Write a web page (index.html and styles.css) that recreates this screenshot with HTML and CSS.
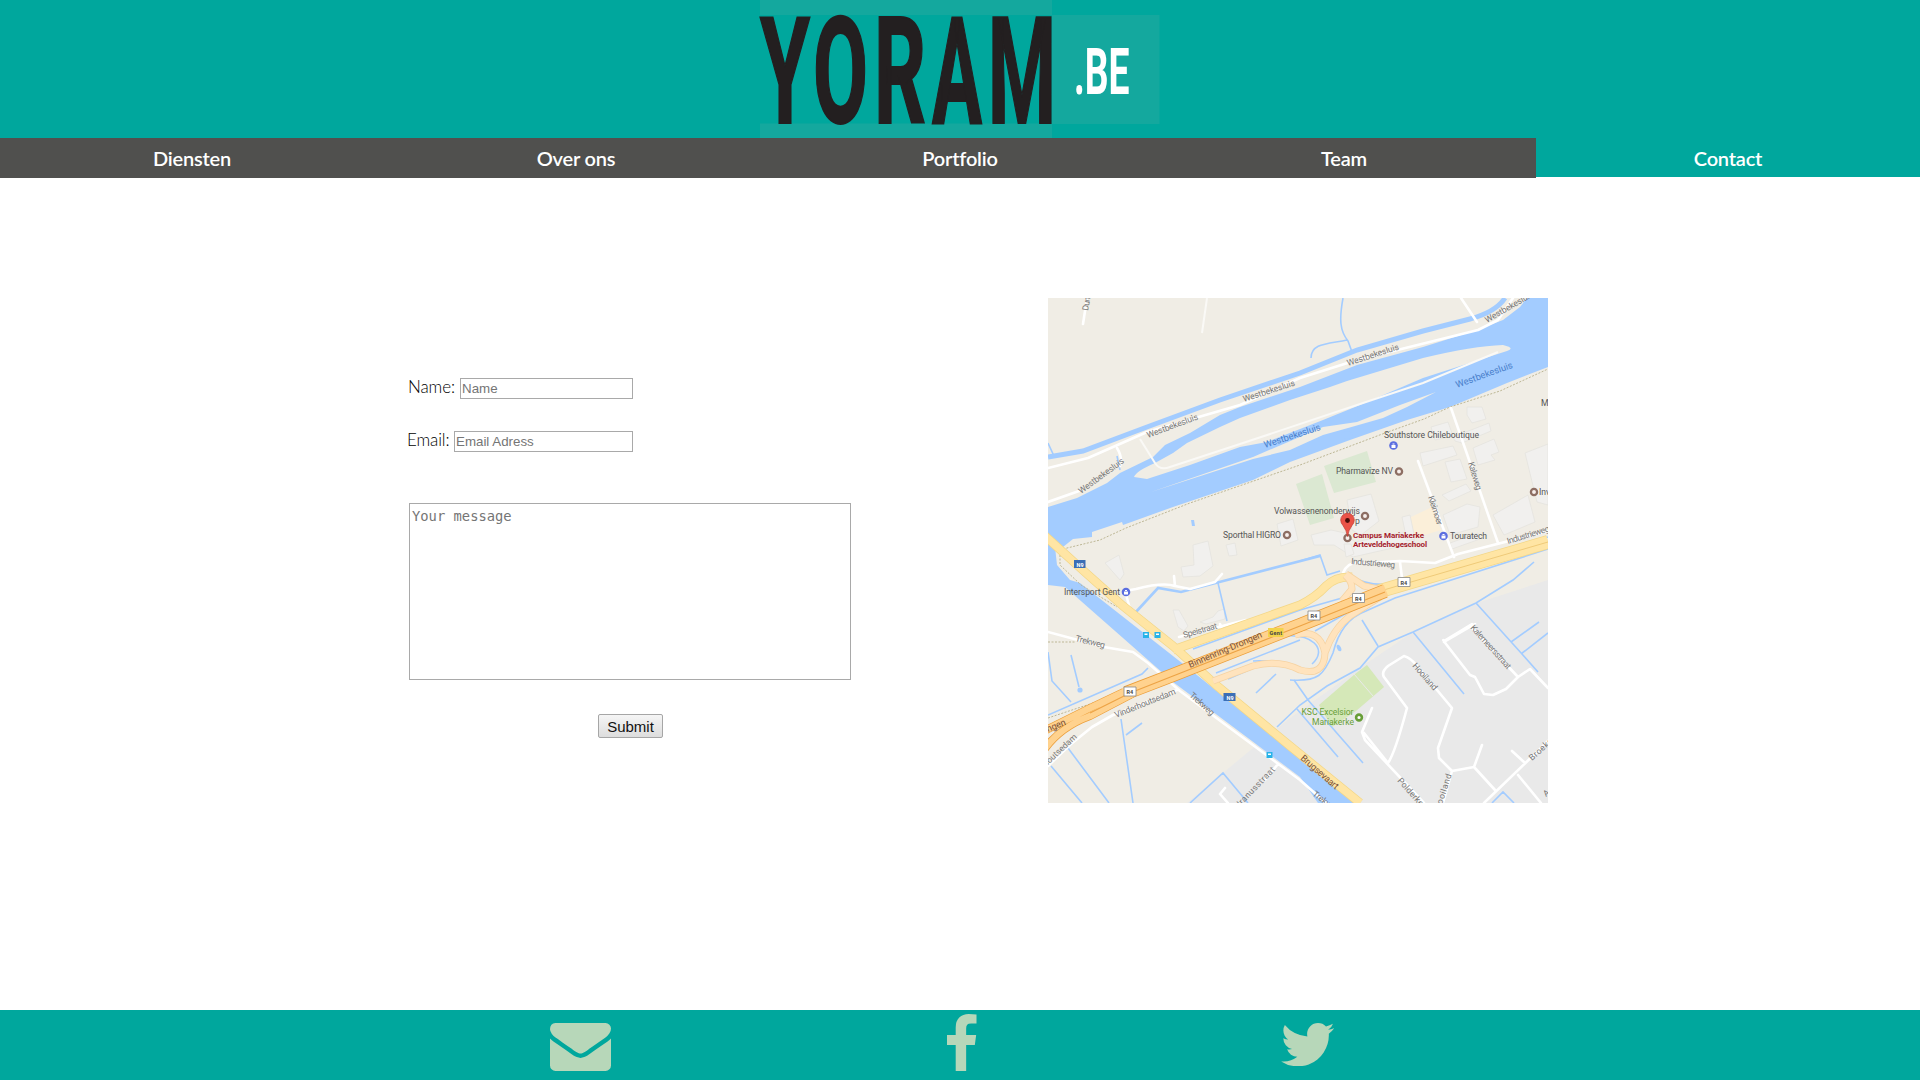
FILE: index.html
```html
<!DOCTYPE html>
<html lang="nl">
<head>
<meta charset="utf-8">
<title>Yoram.be - Contact</title>
<link rel="stylesheet" href="styles.css">
</head>
<body>
<header class="header">
  <svg class="logo" viewBox="0 0 400 138" role="img" aria-label="Yoram.be">
    <path class="logo-panel" d="M0 0h292v15H0zM0 123.500h292V138H0zM292 15h107.500v109H292z"/>
    <g class="logo-name">
      <text x="0" y="122.500" textLength="50" lengthAdjust="spacingAndGlyphs">Y</text>
      <text x="53" y="122.500" textLength="55" lengthAdjust="spacingAndGlyphs">O</text>
      <text x="114" y="122.500" textLength="52" lengthAdjust="spacingAndGlyphs">R</text>
      <text x="172" y="122.500" textLength="50" lengthAdjust="spacingAndGlyphs">A</text>
      <text x="228" y="122.500" textLength="68" lengthAdjust="spacingAndGlyphs">M</text>
    </g>
    <text class="logo-tld" x="314" y="93.500" textLength="55.500" lengthAdjust="spacingAndGlyphs">.BE</text>
  </svg>
</header>
<nav class="nav">
  <a class="nav-item">Diensten</a>
  <a class="nav-item">Over ons</a>
  <a class="nav-item">Portfolio</a>
  <a class="nav-item">Team</a>
  <a class="nav-item nav-active">Contact</a>
</nav>
<main class="main">
  <form class="form">
    <div class="field"><label for="name">Name:</label><input id="name" type="text" placeholder="Name"></div>
    <div class="field field-email"><label for="email">Email:</label><input id="email" type="text" placeholder="Email Adress"></div>
    <textarea class="message" placeholder="Your message"></textarea>
    <button class="submit" type="button">Submit</button>
  </form>
  <svg class="map" viewBox="0 0 500 505">
    <rect width="500" height="505" fill="#f0ede5"/>
    <path fill="#e9e9e9" d="M500 282L429 305 365 334 319 365 242 420 225 434 205 450 139 505H500z"/>
    <!-- parks and sports fields -->
    <path fill="#dbe8d2" d="M276 168L319 153 328 184 286 195zM248 186L274 176 286 220 262 227z"/>
    <path fill="#d5e8b8" d="M271 407L307 376 319 367 336 389 308 413 284 429z"/>
    <path stroke="#e9e9e9" fill="none" d="M306 376L325 398"/>
    <path fill="#fbefd9" d="M361 220L384 209 393 232 367 240z"/>
    <!-- buildings -->
    <g fill="#f1f0ee" stroke="#e5e3de" stroke-width=".8">
      <path d="M419 109L434 109 438 121 424 125 419 117zM383 129L400 124 405 138 387 142zM405 139L441 125 443 133 414 145 407 143zM372 155L405 148 409 157 375 168zM397 164L412 161 419 181 403 184zM425 150L446 141 451 154 443 157 447 162 430 167zM394 197L418 186 423 193 401 203zM395 217L419 206 432 209 430 229 402 237zM445 217L480 197 487 224 456 237zM477 155L500 146V207L489 204z"/>
      <path d="M299 202L323 196 331 223 313 237 304 232zM263 237L283 232 297 235 307 244 363 233 367 245 305 259 286 247 266 247z"/>
      <path d="M354 219L362 217 367 241 359 243zM229 226L245 221 250 242 233 248zM402 245L430 235 432 241 404 251zM296 246L303 246 306 256 298 259z"/>
      <path d="M57 265L71 257 76 276 72 282zM145 247L160 243 165 268 152 278 135 279 133 269 146 267zM178 247L187 245 189 257 181 258zM125 312L131 312 140 328 136 333 130 329zM152 324L165 319 170 313 176 311 177 321 158 326z"/>
    </g>
    <!-- minor waterways -->
    <g fill="none" stroke="#a3ccff" stroke-width="1.600">
      <path d="M295 0C291 22 292 33 300 43L304 54M299 42C280 46 263 45 263 60M0 145L6 158M69 158L72 172"/>
      <path d="M87 315L110 290 133 294 272 258" stroke-width="2.600"/>
      <path d="M252 263L272 257 279 277 292 273M170 285L179 323M145 351L252 312 294 300M168 375L252 342M180 381L210 368M0 354L4 383 23 404M23 357L31 389M0 417L94 376 100 370M73 421L85 505M78 437L94 425M20 450L61 505M3 468L34 505M142 505L175 475 200 505M208 395L228 376M229 429L252 407 279 388 312 370 330 349 365 334 428 305 465 282 486 264M314 322L330 348M365 334L416 396M428 305L474 356 490 374M463 344L491 324M473 356L500 335M246 382L260 402 315 465M249 411L290 459M444 505L455 494 466 505"/>
      <path d="M303 278Q319 288 341 286L500 239M267 333L299 315M205 363C230 361 240 371 254 371M228 339C266 333 280 352 264 366M242 382C270 384 276 377 285 355Q293 322 318 313L347 300 500 251"/>
    </g>
    <!-- canals -->
    <path fill="none" stroke="#a3ccff" stroke-width="5" d="M0 159L35 153 99 129 172 102 252 75 309 52 375 33 422 21Q448 14 457 0"/>
    <path fill="#a3ccff" d="M0 209L29 200 59 185 72 175 105 159 117 147 142 135 172 117 192 109 252 89 309 67 375 49 429 32 455 22 472 9 479 0H500V69L459 85 402 109 359 122 302 142 242 164 205 182 125 209 75 227 74 224 44 234 44 239 25 241 15 249 7 249 9 267 22 282 32 285 139 369 252 460 308 505H270L252 479 125 384 17 289 0 287z"/>
    <path fill="#f0ede5" d="M86 179Q88 173 107 165L125 155 139 145 172 129 192 120 242 102 282 89 299 83 375 60Q425 48 455 47 468 50 459 53L375 80 312 107 275 122 219 144 192 149 142 167 99 181zM103 194L205 159 275 129 309 124 352 107 388 94 359 109 335 120 300 130 275 137 242 152 205 161z"/>
    <ellipse cx="299" cy="137" rx="6" ry="4" fill="#a3ccff"/>
    <circle cx="32" cy="392" r="2.600" fill="#a3ccff"/>
    <ellipse cx="291" cy="350" rx="2" ry="3.500" fill="#a3ccff" transform="rotate(-25 291 350)"/>
    <path fill="#a3ccff" d="M143 222l3 0 1 6h-3z"/>
    <path fill="none" stroke="#bdb795" stroke-dasharray="2 1.500" d="M15 251L52 242 78 230 142 205 252 167 337 135 376 121 402 109 452 93 500 71M12 250V267L33 287 69 309M0 344H27M0 420L60 400"/>
    <!-- local streets -->
    <g fill="none" stroke="#fff" stroke-width="2.600" stroke-linejoin="round" stroke-linecap="round">
      <path d="M35 26L39 0M0 170L40 160 99 134 192 107 252 80 309 62 430 32 450 22 465 0M413 0L429 24M0 204L31 193M69 150Q75 160 72 168"/>
      <path d="M403 110L450 245M370 163L406 259"/>
      <path d="M82 311L77 293 88 291Q115 284 127 288L142 291 167 284 174 276M127 288L126 278M131 339L198 322M172 326L174 331"/>
      <path d="M0 334L56 349 85 354 100 365 132 393 252 482 278 505M0 468L23 446 44 429 65 417 129 392M230 466L217 482M177 490L172 496 180 505"/>
      <path d="M295 275Q300 262 316 265L352 263 387 265 410 256 500 233M352 264L354 280"/>
      <path d="M324 410L314 434 317 442 376 505M316 435L340 465Q347 455 359 410L336 379Q333 374 340 368L356 358Q363 360 369 368L404 410 390 450 391 460 404 473 426 469 447 492M426 469L434 447M436 505L492 451 500 443M464 453L477 465M470 477L493 505M404 473L395 505"/>
      <path d="M427 326L396 344M424 326L396 343Q394 340 398 346L422 377 427 379 436 396 445 397 458 391 470 379 482 371 500 390M424 330L470 379"/>
    </g>
    <g fill="none" stroke="#faf9f6" stroke-width="2">
      <path d="M159 0L154 35M92 141L107 165Q112 173 122 169L192 146 375 85 450 54"/>
    </g>
    <!-- main roads -->
    <g fill="none" stroke-linejoin="round">
      <path stroke="#f3d788" stroke-width="9" d="M-4 237L38 275 75 308 125 348 168 387 242 448 312 505M125 352L252 307Q268 299 278 288 288 278 304 279"/>
      <path stroke="#f3d788" stroke-width="14" d="M322 296L500 244"/>
      <path stroke="#ffe5a4" stroke-width="7.500" d="M-4 237L38 275 75 308 125 348 168 387 242 448 312 505M125 352L252 307Q268 299 278 288 288 278 304 279"/>
      <path stroke="#ffe5a4" stroke-width="12.500" d="M322 296L500 244"/>
      <path stroke="#efca79" d="M322 296L500 244"/>
      <path stroke="#f6d3a2" stroke-width="7" d="M165 383L205 368Q230 361 252 372 276 379 277 355 272 330 247 337M277 355Q285 331 302 318L332 299M297 277Q304 283 304 291L294 303M298 276L316 288 330 291"/>
      <path stroke="#ffe3bd" stroke-width="5.500" d="M165 383L205 368Q230 361 252 372 276 379 277 355 272 330 247 337M277 355Q285 331 302 318L332 299M297 277Q304 283 304 291L294 303M298 276L316 288 330 291"/>
      <path stroke="#ec9f3a" stroke-width="14" d="M78 395L125 377 252 327 337 293"/>
      <path stroke="#ec9f3a" stroke-width="8" d="M-4 433L42 410 84 390M-4 452Q12 429 42 418L84 396"/>
      <path stroke="#ffd28e" stroke-width="12.500" d="M76 396L125 377 252 327 338 292.500"/>
      <path stroke="#ffd28e" stroke-width="6.500" d="M-4 433L42 410 84 390M-4 452Q12 429 42 418L84 396"/>
      <path stroke="#eda345" stroke-width="1.200" d="M42 415L82 395 125 378 252 328 337 294"/>
    </g>
    <!-- street and water names -->
    <g class="street">
      <text transform="translate(40 13) rotate(-80)" textLength="14">Dun</text>
      <text transform="translate(100 140) rotate(-20.500)" textLength="54">Westbekesluis</text>
      <text transform="translate(196 104) rotate(-18)" textLength="54">Westbekesluis</text>
      <text transform="translate(300 68) rotate(-18)" textLength="54">Westbekesluis</text>
      <text transform="translate(439 25) rotate(-30)" textLength="54">Westbekesluis</text>
      <text transform="translate(33 196) rotate(-36)" textLength="54">Westbekesluis</text>
      <text transform="translate(380 199) rotate(72)" textLength="30">Kleimoer</text>
      <text transform="translate(420 165) rotate(73)" textLength="29">Kaleweg</text>
      <text transform="translate(460 246) rotate(-17)" textLength="44">Industrieweg</text>
      <text transform="translate(303 266) rotate(5)" textLength="44">Industrieweg</text>
      <text transform="translate(136 340) rotate(-16)" textLength="35">Speistraat</text>
      <text transform="translate(27 343) rotate(14)" textLength="30">Trekweg</text>
      <text transform="translate(141 398) rotate(42)" textLength="30">Trekweg</text>
      <text transform="translate(68 420) rotate(-22)" textLength="65">Vinderhoutsedam</text>
      <text transform="translate(-2 469) rotate(-43)" textLength="43">noutsedam</text>
      <text transform="translate(190 511) rotate(-46)" textLength="54">Uranusstraat</text>
      <text transform="translate(264 497) rotate(37)" textLength="31">Trekweg</text>
      <text transform="translate(364 368) rotate(49)" textLength="33">Hooiland</text>
      <text transform="translate(422 330) rotate(48)" textLength="56">Kalemeersstraat</text>
      <text transform="translate(349 483) rotate(48)" textLength="44">Polderkens</text>
      <text transform="translate(392 513) rotate(-72)" textLength="38">Hooiland</text>
      <text transform="translate(484 463) rotate(-42)" textLength="35">Broekstr</text>
      <text transform="translate(498 499) rotate(-40)">A</text>
    </g>
    <g class="water-name">
      <text transform="translate(217 150) rotate(-18)" textLength="59">Westbekesluis</text>
      <text transform="translate(409 90) rotate(-20)" textLength="60">Westbekesluis</text>
    </g>
    <g class="road-name">
      <text transform="translate(142 370) rotate(-23)" textLength="79">Binnenring-Drongen</text>
      <text transform="translate(0 434) rotate(-22)" textLength="20">ngen</text>
      <text transform="translate(252 461) rotate(41)" textLength="47">Brugsevaart</text>
    </g>
    <!-- places -->
    <g class="place">
      <text x="336" y="140" textLength="95">Southstore Chileboutique</text>
      <text x="288" y="176" textLength="57">Pharmavize NV</text>
      <text x="226" y="216" textLength="86">Volwassenenonderwijs</text>
      <text x="307" y="226">p</text>
      <text x="175" y="240" textLength="58">Sporthal HIGRO</text>
      <text x="402" y="241" textLength="37">Touratech</text>
      <text x="16" y="297" textLength="56">Intersport Gent</text>
      <text x="493" y="108">M</text>
      <text x="491" y="197">Inv</text>
    </g>
    <g fill="#f7efec" stroke="#8d6e63" stroke-width="2.300">
      <circle cx="351" cy="173.500" r="3.100"/><circle cx="317" cy="218" r="3.100"/><circle cx="239" cy="237" r="3.100"/><circle cx="486" cy="194" r="3.100"/><circle cx="299.500" cy="240" r="3.100"/>
    </g>
    <g fill="#5c6fe0"><circle cx="345.500" cy="147.500" r="4.300"/><circle cx="395.500" cy="238" r="4.300"/><circle cx="78" cy="294" r="4.300"/></g>
    <path fill="#fff" d="M343.500 147h4v3h-4zM344.500 145.500h2v1h-2zM393.500 237.500h4v3h-4zM394.500 236h2v1h-2zM76 293.500h4v3h-4zM77 292h2v1h-2z"/>
    <g class="sport"><text x="253.500" y="417" textLength="52">KSC Excelsior</text><text x="264" y="427" textLength="42">Mariakerke</text></g>
    <circle cx="311" cy="419.500" r="2.900" fill="#fff" stroke="#689f38" stroke-width="2.600"/>
    <!-- shields, bus stops -->
    <g stroke="#888" stroke-width=".8" fill="#fff"><path d="M76 389h12v9H76zM260 313h12v9h-12zM304.500 295.500h12v9h-12zM350 279.500h12v9h-12z"/></g>
    <g class="shield"><text x="78.500" y="396">R4</text><text x="262.500" y="320">R4</text><text x="307" y="302.500">R4</text><text x="352.500" y="286.500">R4</text></g>
    <path fill="#3b6fb6" d="M26 262h11.500v8H26zM175.500 395h12v8h-12z"/>
    <g class="shield shield-light"><text x="28.500" y="268.500">N9</text><text x="178.500" y="401.500">N9</text></g>
    <path fill="#f2d34b" d="M220 330h15.500v9H220z"/>
    <text class="shield" x="221.500" y="336.500" textLength="12.500">Gent</text>
    <path fill="#28b3e8" d="M95 334h6v6h-6zM106.500 334h6v6h-6zM218.500 454h6v6h-6z"/>
    <path fill="#fff" d="M96.500 335.500h3v1.500h-3zM108 335.500h3v1.500h-3zM220 455.500h3v1.500h-3z"/>
    <path fill="#ea5348" stroke="#c0392f" stroke-width=".7" d="M299.500 238.500Q298.500 232 295 227.500 292.700 225 292.700 222a6.800 6.800 0 0 1 13.600 0q0 3-2.300 5.500-3.500 4.500-4.500 11z"/>
    <circle cx="299.500" cy="222.500" r="2.400" fill="#4a0d09"/>
    <g class="campus"><text x="305" y="239.500" textLength="71">Campus Mariakerke</text><text x="305" y="248.500" textLength="74">Arteveldehogeschool</text></g>
  </svg>
</main>
<footer class="footer">
  <svg class="mail" viewBox="0 256 1792 1408"><path d="M1792 710v794q0 66-47 113t-113 47h-1472q-66 0-113-47t-47-113v-794q44 49 101 87 362 246 497 345 57 42 92.500 65.500t94.500 48 110 24.500h2q51 0 110-24.500t94.500-48 92.500-65.500q170-123 498-345 57-39 100-87zm0-294q0 79-49 151t-122 123q-376 261-468 325-10 7-42.500 31t-54 38.500-52 32.500-57.500 27-50 9h-2q-23 0-50-9t-57.500-27-52-32.500-54-38.500-42.500-31q-91-64-262-182.500t-205-142.500q-62-42-117-115.500t-55-136.500q0-78 41.500-130t118.500-52h1472q65 0 112.500 47t47.500 113z"/></svg>
  <svg class="facebook" viewBox="479 0 864 1664"><path d="M1343 12v264h-157q-86 0-116 36t-30 108v189h293l-39 296h-254v759h-306v-759h-255v-296h255v-218q0-186 104-288.500t277-102.500q147 0 228 12z"/></svg>
  <svg class="twitter" viewBox="108 256 1576 1280"><path d="M1684 408q-67 98-162 167 1 14 1 42 0 130-38 259.500t-115.500 248.500-184.500 210.500-258 146-323 54.500q-271 0-492-145 35 4 78 4 225 0 401-138-105-2-188-64.500t-114-159.500q33 5 61 5 43 0 85-11-112-23-185.500-111.500t-73.500-205.500v-4q68 38 146 41-66-44-105-115t-39-154q0-88 44-163 121 149 294.500 238.500t371.500 99.500q-8-38-8-74 0-134 94.500-228.500t228.500-94.500q140 0 236 102 109-21 205-78-37 115-142 178 93-10 186-50z"/></svg>
</footer>
</body>
</html>
```
FILE: styles.css
```css
* { box-sizing: border-box; }
body { margin: 0; height: 1080px; display: flex; flex-direction: column; background: #fff; color: #000; font-family: Lato, "Open Sans", sans-serif; overflow: hidden; }
.header { height: 138px; background: #00a79d; padding-left: 760px; }
.logo { display: block; width: 400px; height: 138px; overflow: visible; }
.logo-panel { fill: #14a89e; }
.logo-name { font: 700 149px Roboto, sans-serif; fill: #231f20; stroke: #231f20; stroke-width: 2px; }
.logo-tld { font: 700 64px Roboto, sans-serif; fill: #fff; }
.nav { height: 40px; display: grid; grid-template-columns: repeat(5, 1fr); align-items: start; }
.nav-item { height: 40px; line-height: 41px; background: #50504e; color: #fff; font-size: 20px; font-weight: 600; letter-spacing: -.2px; text-align: center; }
.nav-active { height: 39px; background: #00a79d; }
.main { flex: 1; display: flex; align-items: flex-start; padding-left: 407px; }
.form { width: 641px; padding-top: 200px; display: flex; flex-direction: column; align-items: flex-start; }
.field { width: 226px; height: 21px; display: flex; align-items: center; padding-left: 1px; font-size: 17px; font-weight: 300; }
.field label { width: 52px; line-height: 19px; padding-bottom: 4px; letter-spacing: -.1px; }
.field input { flex: 1; min-width: 0; height: 21px; border: 1px solid #a9a9a9; padding: 1px; font: 13.33px "Liberation Sans", Arial, sans-serif; }
.field-email { margin-top: 32px; padding-left: 0; }
.field-email label { width: 47px; }
::placeholder { color: #757575; opacity: 1; }
.message { margin: 51px 0 0 2px; width: 442px; height: 177px; padding: 4px 2px 2px; border: 1px solid #a9a9a9; font: 13.8px "DejaVu Sans Mono", monospace; resize: none; }
.submit { margin: 34px 0 0 191px; width: 65px; height: 24px; padding: 0; border: 1px solid #a6a6a6; border-radius: 2px; background: linear-gradient(#f5f5f5, #dddddd); color: #111; font: 15px "Liberation Sans", Arial, sans-serif; }
.map { display: block; width: 500px; height: 505px; margin-top: 120px; font-family: Roboto, sans-serif; font-size: 8.6px; overflow: hidden; }
.street { fill: #777; }
.water-name { fill: #4a80cb; font-size: 9.4px; }
.road-name { fill: #795038; font-size: 9.2px; }
.place { fill: #555; }
.sport { fill: #689f38; }
.shield { fill: #444; font-size: 5.5px; font-weight: 700; }
.shield-light { fill: #fff; }
.campus { fill: #a51d2d; font-size: 8px; font-weight: 700; }
.footer { height: 70px; background: #00a79d; display: flex; align-items: flex-start; padding-left: 549.5px; fill: #b7d7b9; }
.mail { width: 61px; height: 48px; margin-top: 13px; }
.facebook { width: 29.5px; height: 57px; margin: 4px 0 0 336.5px; }
.twitter { width: 53.3px; height: 43.3px; margin: 13px 0 0 304.2px; }
```
